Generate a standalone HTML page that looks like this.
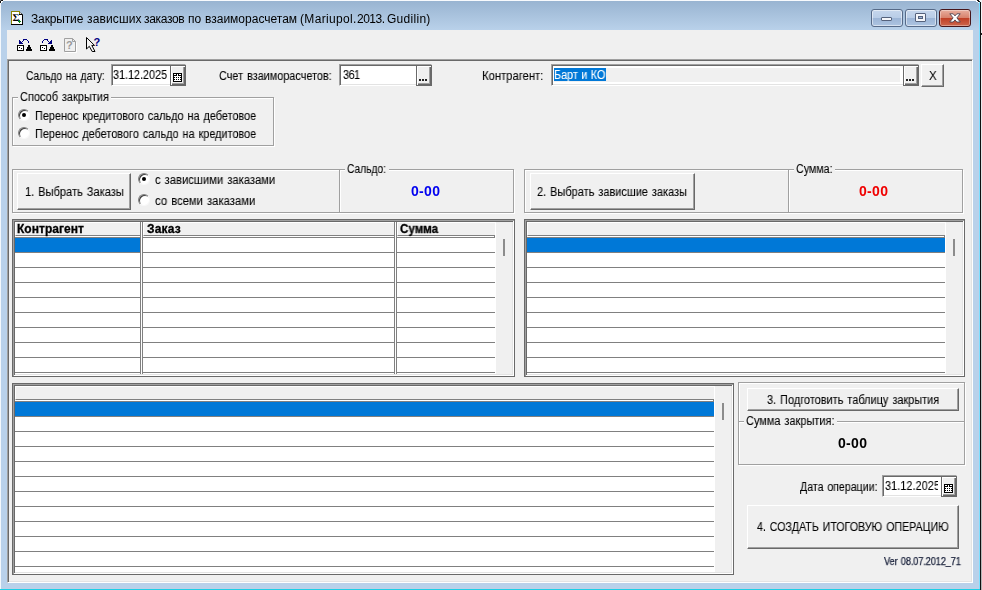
<!DOCTYPE html>
<html lang="ru">
<head>
<meta charset="utf-8">
<title>Закрытие зависших заказов по взаиморасчетам</title>
<style>
html,body{margin:0;padding:0;}
body{width:982px;height:590px;overflow:hidden;position:relative;background:#b9d1ea;font-family:"Liberation Sans",sans-serif;font-size:12px;color:#000;}
*{box-sizing:border-box;}
.a{position:absolute;}
.t{position:absolute;white-space:nowrap;line-height:13px;height:13px;will-change:transform;-webkit-text-stroke:0.08px currentColor;word-spacing:1px;}
.b{font-weight:bold;-webkit-text-stroke:0.3px currentColor;}
.ns{-webkit-text-stroke:0;}
.z{line-height:16px;height:16px;font-weight:bold;-webkit-text-stroke:0;}
#frame{left:0;top:0;width:981px;height:590px;background:#b9d1ea;}
#title{left:0;top:0;width:980px;height:30px;background:linear-gradient(#99b4d1 1px,#b9d1ea 30px);}
#client{left:7px;top:30px;width:966px;height:553px;background:#f0f0f0;}
.btn{position:absolute;background:#f0f0f0;border:1px solid;border-color:#fff #696969 #696969 #fff;box-shadow:inset -1px -1px 0 #a0a0a0;}
.ebtn{position:absolute;background:#f0f0f0;border:1px solid #696969;box-shadow:inset 1px 1px 0 #fff,inset -1px -1px 0 #696969,inset -2px -2px 0 #a0a0a0;}
.sunk{position:absolute;border:1px solid;border-color:#a0a0a0 #fff #fff #a0a0a0;box-shadow:inset 1px 1px 0 #696969,inset -1px -1px 0 #e3e3e3;background:#fff;}
.grp{position:absolute;border:1px solid #a0a0a0;box-shadow:1px 1px 0 #fff,inset 1px 1px 0 #fff;}
.cap{background:#f0f0f0;}
.grid{position:absolute;border:1px solid #696969;box-shadow:inset 1px 1px 0 #a0a0a0,inset -1px -1px 0 #fff,inset 2px 2px 0 #696969,inset -2px -2px 0 #e3e3e3;background:#f0f0f0;}
.wh{position:absolute;background:#fff;}
.rows{position:absolute;background:repeating-linear-gradient(#808080 0,#808080 1px,transparent 1px,transparent 15px);}
.sel{position:absolute;background:#0078d7;height:14px;}
.hd{position:absolute;height:14px;background:#f0f0f0;border:1px solid;border-color:#fff #808080 #808080 #fff;}
.vl{position:absolute;width:3px;background:#fff;border-left:1px solid #808080;border-right:1px solid #808080;}
.thumb{position:absolute;width:2px;height:17px;background:#8c8c8c;}
.radio{position:absolute;width:12px;height:12px;border-radius:50%;background:#fff;border:1px solid;border-color:#808080 #f8f8f8 #f8f8f8 #808080;box-shadow:inset 1px 1px 0 #404040;}
.radio.on::after{content:"";position:absolute;left:3px;top:3px;width:4px;height:4px;border-radius:50%;background:#000;}
.vs{position:absolute;width:2px;border-left:1px solid #a0a0a0;border-right:1px solid #fff;}
.hs{position:absolute;height:2px;border-top:1px solid #a0a0a0;border-bottom:1px solid #fff;}
</style>
</head>
<body>
<div id="frame" class="a"></div>
<div id="title" class="a"></div>
<div class="a" style="left:979px;top:3px;width:1px;height:587px;background:#7fe0ff;"></div>
<div class="a" style="left:980px;top:3px;width:1px;height:587px;background:#101010;"></div>
<div class="a" style="left:981px;top:0;width:1px;height:590px;background:linear-gradient(#f4f6f8,#b4b4b4);"></div>
<div class="a" style="left:981px;top:33px;width:1px;height:2px;background:#222;"></div>
<div class="a" style="left:0;top:588px;width:979px;height:1px;background:#c0cfe6;"></div>
<div class="a" style="left:0;top:589px;width:980px;height:1px;background:#1ccfe6;"></div>
<div class="a" style="left:0;top:0;width:1px;height:589px;background:#f4f8fc;"></div>
<div class="a" style="left:0;top:0;width:979px;height:1px;background:#f8fafd;"></div>
<!-- rounded corners of the window -->
<svg class="a" style="left:0;top:0" width="4" height="4" viewBox="0 0 4 4" shape-rendering="crispEdges"><rect x="0" y="0" width="1" height="1" fill="#888"/><rect x="1" y="0" width="2" height="1" fill="#111"/><rect x="0" y="1" width="1" height="2" fill="#111"/><rect x="1" y="1" width="2" height="1" fill="#fff"/><rect x="1" y="2" width="1" height="1" fill="#fff"/></svg>
<svg class="a" style="left:976px;top:0" width="6" height="4" viewBox="0 0 6 4" shape-rendering="crispEdges"><rect x="1" y="0" width="2" height="1" fill="#111"/><rect x="3" y="0" width="3" height="1" fill="#f0f2f4"/><rect x="2" y="1" width="2" height="1" fill="#111"/><rect x="4" y="1" width="2" height="3" fill="#f0f2f4"/><rect x="3" y="2" width="1" height="1" fill="#7fe0ff"/><rect x="4" y="2" width="1" height="2" fill="#111"/><rect x="0" y="1" width="2" height="1" fill="#fff"/><rect x="2" y="2" width="1" height="1" fill="#fff"/></svg>

<!-- title bar -->
<svg class="a" style="left:11px;top:11px" width="12" height="14" viewBox="0 0 12 14" shape-rendering="crispEdges">
<path d="M1 1H8V4H11V13H1Z" fill="#fff"/>
<path d="M9 1V3H11Z" fill="#d8d8d8" shape-rendering="auto"/>
<rect x="0" y="0" width="9" height="1" fill="#8a8500"/><rect x="0" y="0" width="1" height="13" fill="#8a8500"/><rect x="8" y="0" width="1" height="4" fill="#8a8500"/>
<rect x="8" y="3" width="4" height="1" fill="#000"/><rect x="11" y="3" width="1" height="11" fill="#000"/><rect x="0" y="13" width="12" height="1" fill="#000"/>
<path d="M9.500 1.500L11.500 3.500" stroke="#555" stroke-width="1" shape-rendering="auto"/>
<text x="1.500" y="10" font-family="Liberation Serif,serif" font-size="10.500" font-weight="bold" fill="#000" text-rendering="geometricPrecision">Σ</text>
<rect x="8" y="9" width="1" height="3" fill="#0a8a18"/><rect x="7" y="10" width="3" height="1" fill="#0a8a18"/>
</svg>
<div class="t ns" id="ttA" style="left:31px;top:11px;letter-spacing:-0.143px;font-size:12px;line-height:16px;height:16px;">Закрытие</div>
<div class="t ns" id="ttB" style="left:87px;top:11px;letter-spacing:0.143px;font-size:12px;line-height:16px;height:16px;">зависших</div>
<div class="t ns" id="ttC" style="left:144px;top:11px;letter-spacing:-0.333px;font-size:12px;line-height:16px;height:16px;">заказов</div>
<div class="t ns" id="ttD" style="left:188px;top:11px;letter-spacing:0px;font-size:12px;line-height:16px;height:16px;">по</div>
<div class="t ns" id="ttE" style="left:205px;top:11px;letter-spacing:0px;font-size:12px;line-height:16px;height:16px;">взаиморасчетам</div>
<div class="t ns" id="ttF" style="left:300px;top:11px;letter-spacing:0.333px;font-size:12px;line-height:16px;height:16px;">(Mariupol.</div>
<div class="t ns" id="ttG" style="left:357px;top:11px;letter-spacing:-0.5px;font-size:12px;line-height:16px;height:16px;">2013.</div>
<div class="t ns" id="ttH" style="left:387px;top:11px;letter-spacing:0.286px;font-size:12px;line-height:16px;height:16px;">Gudilin)</div>

<!-- window buttons -->
<div class="a" style="left:871px;top:9px;width:32px;height:18px;border:1px solid #566a88;border-radius:3px;background:linear-gradient(#c5d6ec 0,#b9cde7 48%,#9cb5d6 52%,#adc4e1 100%);box-shadow:inset 0 0 0 1px rgba(255,255,255,.5);"></div>
<div class="a" style="left:905px;top:9px;width:32px;height:18px;border:1px solid #566a88;border-radius:3px;background:linear-gradient(#c5d6ec 0,#b9cde7 48%,#9cb5d6 52%,#adc4e1 100%);box-shadow:inset 0 0 0 1px rgba(255,255,255,.5);"></div>
<div class="a" style="left:939px;top:9px;width:32px;height:18px;border:1px solid #47161a;border-radius:3px;background:linear-gradient(#e8ae9f 0,#d8826d 48%,#c03f26 52%,#cd664c 100%);box-shadow:inset 0 0 0 1px rgba(255,255,255,.35);"></div>
<div class="a" style="left:881px;top:17px;width:11px;height:4px;background:#f4f6fa;border:1px solid #55627c;border-radius:1px;"></div>
<div class="a" style="left:915px;top:13px;width:11px;height:9px;background:#f4f6fa;border:1px solid #55627c;border-radius:1px;"></div>
<div class="a" style="left:918px;top:16px;width:5px;height:3px;background:#9db5d6;border:1px solid #55627c;"></div>
<svg class="a" style="left:947px;top:12px" width="16" height="12" viewBox="0 0 16 12"><path d="M2.800 1.800h3.400L8 3.900l1.800-2.100h3.400L9.900 5.900 13.300 10h-3.500L8 7.900 6.200 10H2.700L6.100 5.900Z" fill="#fff" stroke="#4c4250" stroke-width="0.900"/></svg>

<div id="client" class="a"></div>

<!-- toolbar icons -->
<svg class="a" style="left:16px;top:37px" width="90" height="16" viewBox="0 0 90 16" shape-rendering="crispEdges">
<!-- icon 1: box 17..23 x, 45..50 y => local 1..7, 8..13 -->
<g fill="#000080">
<rect x="3" y="3" width="1" height="4"/><rect x="4" y="4" width="1" height="3"/><rect x="5" y="5" width="1" height="2"/><rect x="6" y="6" width="1" height="1"/>
<rect x="6" y="4" width="1" height="1"/><rect x="7" y="3" width="1" height="1"/><rect x="7" y="2" width="4" height="1"/><rect x="11" y="3" width="1" height="1"/><rect x="12" y="4" width="1" height="2"/>
<rect x="35" y="3" width="1" height="4"/><rect x="34" y="4" width="1" height="3"/><rect x="33" y="5" width="1" height="2"/><rect x="32" y="6" width="1" height="1"/>
<rect x="32" y="4" width="1" height="1"/><rect x="31" y="3" width="1" height="1"/><rect x="28" y="2" width="4" height="1"/><rect x="27" y="3" width="1" height="1"/><rect x="26" y="4" width="1" height="2"/>
</g>
<g fill="#000">
<rect x="1" y="8" width="7" height="6"/><rect x="24" y="8" width="7" height="6"/>
<rect x="12" y="8" width="2" height="2"/><rect x="11" y="10" width="4" height="2"/><rect x="10" y="12" width="6" height="2"/>
<rect x="35" y="8" width="2" height="2"/><rect x="34" y="10" width="4" height="2"/><rect x="33" y="12" width="6" height="2"/>
</g>
<g fill="#fff"><rect x="2" y="9" width="5" height="4"/><rect x="25" y="9" width="5" height="4"/></g>
<g fill="#000"><rect x="3" y="10" width="1" height="1"/><rect x="5" y="11" width="1" height="1"/><rect x="26" y="10" width="1" height="1"/><rect x="28" y="11" width="1" height="1"/></g>
<!-- icon 3: disabled doc 64..75, 38..51 => local 48..59, 1..14 -->
<g shape-rendering="auto">
<path d="M49.500 2.500h8l3 3v10h-11z" fill="none" stroke="#fff"/>
<path d="M48.500 1.500h8l3 3v10h-11z" fill="#f0f0f0" stroke="#a0a0a0"/>
<path d="M56.500 1.500v3h3" fill="none" stroke="#a0a0a0"/>
<text x="50" y="12" font-size="11" font-weight="bold" fill="#9a9a9a" font-family="Liberation Sans,sans-serif">?</text>
<!-- icon 4: cursor tip (86,37) => local (70,0) -->
<path d="M70.500 0.500V12L73.300 9.300L76.200 14.500H79L75.800 8.400H78.500Z" fill="#f4f4f4" stroke="#000" stroke-width="1"/>
<text x="77.600" y="8.600" font-size="11" font-weight="bold" fill="#000080" font-family="Liberation Sans,sans-serif">?</text>
</g>
</svg>

<!-- main panel (sunken) -->
<div class="a" style="left:7px;top:59px;width:966px;height:524px;border:1px solid;border-color:#a0a0a0 #fff #fff #a0a0a0;box-shadow:inset 1px 1px 0 #696969,inset -1px -1px 0 #e3e3e3;"></div>

<!-- row 1 -->
<div class="t" id="l1" style="left:26px;top:70px;letter-spacing:0px;transform:scaleX(0.849);transform-origin:0 0;">Сальдо на дату:</div>
<div class="sunk" style="left:111px;top:64px;width:75px;height:22px;"></div>
<div class="t" id="d1" style="left:113px;top:69px;letter-spacing:0.0px;transform:scaleX(0.9);transform-origin:0 0;">31.12.2025</div>
<div class="ebtn" style="left:170px;top:65px;width:16px;height:21px;"></div>
<svg class="a" style="left:173px;top:73px" width="9" height="9" viewBox="0 0 9 9" shape-rendering="crispEdges"><rect width="9" height="9" fill="#000"/><rect x="1" y="1" width="2" height="1" fill="#fff"/><rect x="4" y="1" width="1" height="1" fill="#fff"/><rect x="6" y="1" width="2" height="1" fill="#fff"/><rect x="4" y="2" width="1" height="1" fill="#fff"/><rect x="1" y="3" width="7" height="1" fill="#fff"/><rect x="2" y="4" width="1" height="1" fill="#fff"/><rect x="4" y="4" width="1" height="1" fill="#fff"/><rect x="6" y="4" width="1" height="1" fill="#fff"/><rect x="1" y="5" width="7" height="1" fill="#fff"/><rect x="2" y="6" width="1" height="1" fill="#fff"/><rect x="4" y="6" width="1" height="1" fill="#fff"/><rect x="6" y="6" width="1" height="1" fill="#fff"/><rect x="1" y="7" width="7" height="1" fill="#fff"/></svg>

<div class="t" id="l2" style="left:219px;top:70px;letter-spacing:0px;transform:scaleX(0.906);transform-origin:0 0;">Счет взаиморасчетов:</div>
<div class="sunk" style="left:339px;top:64px;width:93px;height:22px;"></div>
<div class="t" id="n361" style="left:343px;top:69px;letter-spacing:-0.5px;transform:scaleX(0.9);transform-origin:0 0;">361</div>
<div class="ebtn" style="left:416px;top:65px;width:16px;height:21px;"></div>
<svg class="a" style="left:419px;top:79px" width="8" height="2" viewBox="0 0 8 2" shape-rendering="crispEdges"><rect x="0" y="0" width="2" height="2" fill="#222"/><rect x="3" y="0" width="2" height="2" fill="#222"/><rect x="6" y="0" width="2" height="2" fill="#222"/></svg>

<div class="t" id="l3" style="left:482px;top:70px;letter-spacing:0px;transform:scaleX(0.938);transform-origin:0 0;">Контрагент:</div>
<div class="sunk" style="left:551px;top:64px;width:368px;height:22px;"></div>
<div class="a" style="left:554px;top:68px;width:346px;height:14px;background:#f0f0f0;"></div>
<div class="a" style="left:554px;top:68px;width:52px;height:13px;background:#0078d7;"></div>
<div class="t" id="sel" style="left:554px;top:69px;letter-spacing:0px;word-spacing:0.5px;transform:scaleX(0.9);transform-origin:0 0;color:#fff;">Барт и КО</div>
<div class="ebtn" style="left:903px;top:65px;width:16px;height:21px;"></div>
<svg class="a" style="left:906px;top:79px" width="8" height="2" viewBox="0 0 8 2" shape-rendering="crispEdges"><rect x="0" y="0" width="2" height="2" fill="#222"/><rect x="3" y="0" width="2" height="2" fill="#222"/><rect x="6" y="0" width="2" height="2" fill="#222"/></svg>
<div class="btn" style="left:921px;top:64px;width:23px;height:23px;"></div>
<div class="t" id="xb" style="left:929px;top:70px;letter-spacing:0px;transform:scaleX(0.95);transform-origin:0 0;">X</div>

<!-- group: Способ закрытия -->
<div class="grp" style="left:12px;top:97px;width:262px;height:49px;"></div>
<div class="a cap" style="left:18px;top:97px;width:93px;height:2px;"></div>
<div class="t" id="g1" style="left:20px;top:91px;letter-spacing:0px;transform:scaleX(0.914);transform-origin:0 0;">Способ закрытия</div>
<div class="radio on" style="left:18px;top:109px;"></div>
<div class="t" id="r1" style="left:35px;top:110px;letter-spacing:0px;transform:scaleX(0.906);transform-origin:0 0;">Перенос кредитового сальдо на дебетовое</div>
<div class="radio" style="left:18px;top:127px;"></div>
<div class="t" id="r2" style="left:35px;top:128px;letter-spacing:0px;transform:scaleX(0.906);transform-origin:0 0;">Перенос дебетового сальдо на кредитовое</div>

<!-- row 2 left -->
<div class="grp" style="left:12px;top:169px;width:502px;height:44px;"></div>
<div class="btn" style="left:17px;top:173px;width:114px;height:37px;"></div>
<div class="t" id="b1" style="left:25px;top:186px;letter-spacing:0px;transform:scaleX(0.922);transform-origin:0 0;">1. Выбрать Заказы</div>
<div class="radio on" style="left:138px;top:173px;"></div>
<div class="t" id="r3" style="left:155px;top:174px;letter-spacing:0px;transform:scaleX(0.935);transform-origin:0 0;">с зависшими заказами</div>
<div class="radio" style="left:138px;top:194px;"></div>
<div class="t" id="r4" style="left:155px;top:195px;letter-spacing:0px;transform:scaleX(0.94);transform-origin:0 0;">со всеми заказами</div>
<div class="vs" style="left:339px;top:170px;height:42px;"></div>
<div class="a cap" style="left:345px;top:169px;width:44px;height:2px;"></div>
<div class="t" id="g2" style="left:347px;top:163px;letter-spacing:0px;transform:scaleX(0.851);transform-origin:0 0;">Сальдо:</div>
<div class="t z" id="z1" style="left:411px;top:183px;letter-spacing:0.333px;font-size:14px;color:#0000f0;">0-00</div>

<!-- row 2 right -->
<div class="grp" style="left:524px;top:169px;width:439px;height:44px;"></div>
<div class="btn" style="left:530px;top:173px;width:165px;height:37px;"></div>
<div class="t" id="b2" style="left:537px;top:186px;letter-spacing:0px;transform:scaleX(0.915);transform-origin:0 0;">2. Выбрать зависшие заказы</div>
<div class="vs" style="left:788px;top:170px;height:42px;"></div>
<div class="a cap" style="left:794px;top:169px;width:41px;height:2px;"></div>
<div class="t" id="g3" style="left:796px;top:163px;letter-spacing:0px;transform:scaleX(0.89);transform-origin:0 0;">Сумма:</div>
<div class="t z" id="z2" style="left:859px;top:183px;letter-spacing:0.333px;font-size:14px;color:#f00000;">0-00</div>

<!-- grid 1 -->
<div class="grid" style="left:12px;top:219px;width:503px;height:158px;"></div>
<div class="wh" style="left:15px;top:236px;width:481px;height:138px;"></div>
<div class="rows" style="left:15px;top:237px;width:480px;height:137px;"></div>
<div class="sel" style="left:15px;top:238px;width:125px;"></div>
<div class="hd" style="left:15px;top:222px;width:126px;"></div>
<div class="hd" style="left:143px;top:222px;width:252px;"></div>
<div class="hd" style="left:397px;top:222px;width:98px;border-right:0;"></div>
<div class="a" style="left:494px;top:235px;width:1px;height:3px;background:#808080;"></div>
<div class="wh" style="left:495px;top:222px;width:1px;height:14px;"></div>
<div class="vl" style="left:140px;top:222px;height:152px;"></div>
<div class="vl" style="left:394px;top:222px;height:152px;"></div>
<div class="t b" id="h1" style="left:17px;top:223px;letter-spacing:0.033px;">Контрагент</div>
<div class="t b" id="h2" style="left:147px;top:223px;letter-spacing:0.2px;">Заказ</div>
<div class="t b" id="h3" style="left:400px;top:223px;letter-spacing:0px;transform:scaleX(0.965);transform-origin:0 0;">Сумма</div>
<div class="thumb" style="left:503px;top:239px;"></div>

<!-- grid 2 -->
<div class="grid" style="left:524px;top:219px;width:441px;height:158px;"></div>
<div class="wh" style="left:527px;top:236px;width:419px;height:138px;"></div>
<div class="rows" style="left:527px;top:237px;width:418px;height:137px;"></div>
<div class="sel" style="left:527px;top:238px;width:418px;"></div>
<div class="hd" style="left:527px;top:222px;width:418px;border-right:0;"></div>
<div class="a" style="left:944px;top:235px;width:1px;height:3px;background:#808080;"></div>
<div class="wh" style="left:945px;top:222px;width:1px;height:14px;"></div>
<div class="thumb" style="left:953px;top:239px;"></div>

<!-- grid 3 -->
<div class="grid" style="left:12px;top:383px;width:722px;height:192px;"></div>
<div class="wh" style="left:15px;top:400px;width:700px;height:172px;"></div>
<div class="rows" style="left:15px;top:401px;width:699px;height:171px;"></div>
<div class="sel" style="left:15px;top:402px;width:699px;"></div>
<div class="hd" style="left:15px;top:386px;width:699px;border-right:0;"></div>
<div class="a" style="left:713px;top:399px;width:1px;height:3px;background:#808080;"></div>
<div class="wh" style="left:714px;top:386px;width:1px;height:14px;"></div>
<div class="thumb" style="left:722px;top:403px;"></div>

<!-- right bottom -->
<div class="grp" style="left:738px;top:382px;width:227px;height:83px;"></div>
<div class="btn" style="left:747px;top:388px;width:212px;height:23px;"></div>
<div class="t" id="b3" style="left:767px;top:394px;letter-spacing:0px;transform:scaleX(0.912);transform-origin:0 0;">3. Подготовить таблицу закрытия</div>
<div class="hs" style="left:739px;top:421px;width:225px;"></div>
<div class="a cap" style="left:744px;top:421px;width:93px;height:2px;"></div>
<div class="t" id="g4" style="left:746px;top:415px;letter-spacing:0px;transform:scaleX(0.914);transform-origin:0 0;">Сумма закрытия:</div>
<div class="t z" id="z3" style="left:838px;top:435px;letter-spacing:0.333px;font-size:14px;">0-00</div>

<div class="t" id="l4" style="left:800px;top:481px;letter-spacing:0px;transform:scaleX(0.883);transform-origin:0 0;">Дата операции:</div>
<div class="sunk" style="left:882px;top:475px;width:75px;height:22px;"></div>
<div class="t" id="d2" style="left:885px;top:480px;letter-spacing:0.111px;transform:scaleX(0.9);transform-origin:0 0;width:58.9px;overflow:hidden;">31.12.2025</div>
<div class="ebtn" style="left:941px;top:476px;width:16px;height:21px;"></div>
<svg class="a" style="left:944px;top:484px" width="9" height="9" viewBox="0 0 9 9" shape-rendering="crispEdges"><rect width="9" height="9" fill="#000"/><rect x="1" y="1" width="2" height="1" fill="#fff"/><rect x="4" y="1" width="1" height="1" fill="#fff"/><rect x="6" y="1" width="2" height="1" fill="#fff"/><rect x="4" y="2" width="1" height="1" fill="#fff"/><rect x="1" y="3" width="7" height="1" fill="#fff"/><rect x="2" y="4" width="1" height="1" fill="#fff"/><rect x="4" y="4" width="1" height="1" fill="#fff"/><rect x="6" y="4" width="1" height="1" fill="#fff"/><rect x="1" y="5" width="7" height="1" fill="#fff"/><rect x="2" y="6" width="1" height="1" fill="#fff"/><rect x="4" y="6" width="1" height="1" fill="#fff"/><rect x="6" y="6" width="1" height="1" fill="#fff"/><rect x="1" y="7" width="7" height="1" fill="#fff"/></svg>

<div class="btn" style="left:747px;top:505px;width:212px;height:44px;"></div>
<div class="t" id="b4" style="left:757px;top:521px;letter-spacing:0.037px;transform:scaleX(0.882);transform-origin:0 0;">4. СОЗДАТЬ ИТОГОВУЮ ОПЕРАЦИЮ</div>
<div class="t" id="ver" style="left:884px;top:555px;letter-spacing:-0.125px;font-size:10px;transform:scaleX(0.92);transform-origin:0 0;color:#18203a;-webkit-text-stroke:0.25px #18203a;">Ver 08.07.2012_71</div>

</body>
</html>
